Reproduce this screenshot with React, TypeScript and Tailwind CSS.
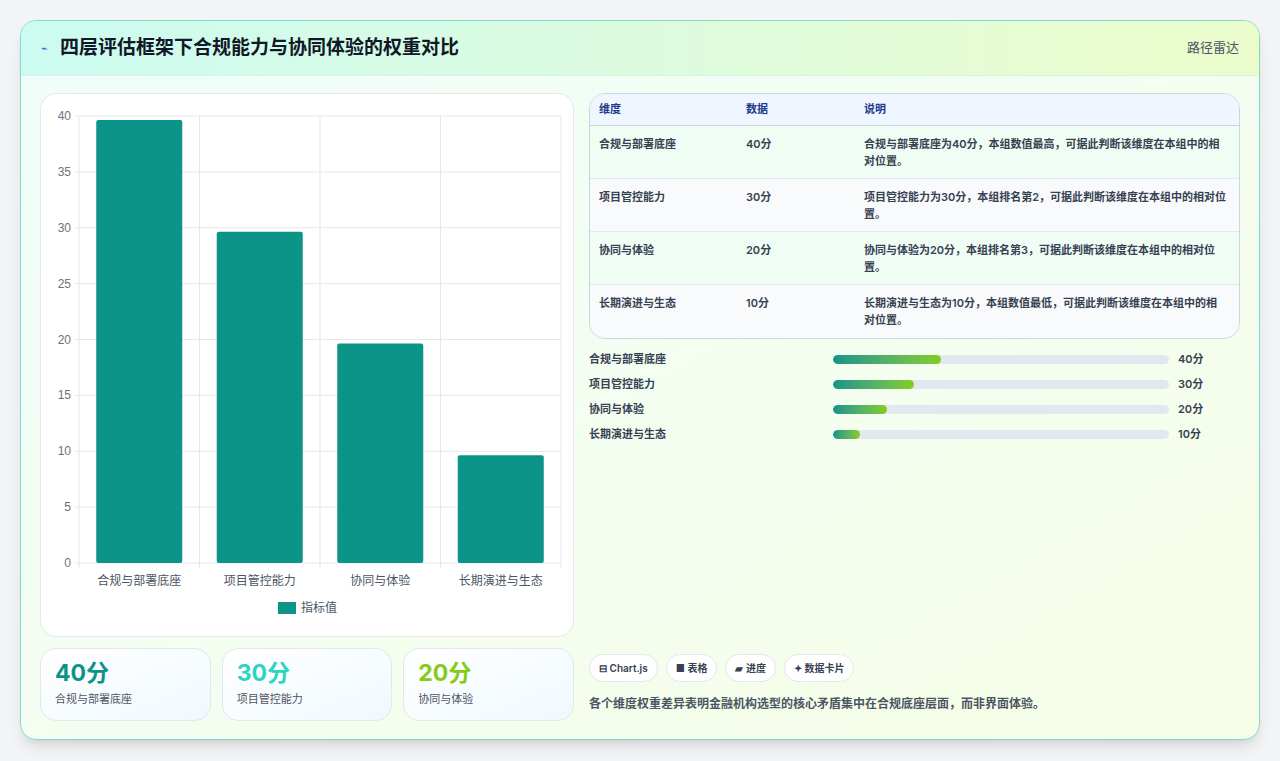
import React from "react";

const data = [
  { n: "合规与部署底座", v: 40, d: "合规与部署底座为40分，本组数值最高，可据此判断该维度在本组中的相对位置。" },
  { n: "项目管控能力", v: 30, d: "项目管控能力为30分，本组排名第2，可据此判断该维度在本组中的相对位置。" },
  { n: "协同与体验", v: 20, d: "协同与体验为20分，本组排名第3，可据此判断该维度在本组中的相对位置。" },
  { n: "长期演进与生态", v: 10, d: "长期演进与生态为10分，本组数值最低，可据此判断该维度在本组中的相对位置。" },
];

function Chart() {
  const W = 533, H = 543;
  const x0 = 38, x1 = 520, y0 = 22, y1 = 469;
  const ticks = [0, 5, 10, 15, 20, 25, 30, 35, 40];
  const cw = (x1 - x0) / 4;
  return (
    <svg width={W} height={H} className="block">
      {ticks.map((t) => {
        const y = y1 - ((y1 - y0) * t) / 40;
        return (
          <g key={t}>
            <line x1={x0 - 4} x2={x1} y1={y} y2={y} stroke="#e5e7eb" />
            <text x={x0 - 8} y={y + 4} textAnchor="end" fontSize="12" fill="#6b7280" fontFamily="Liberation Sans, sans-serif">{t}</text>
          </g>
        );
      })}
      {[0, 1, 2, 3, 4].map((i) => (
        <line key={i} x1={x0 + cw * i} x2={x0 + cw * i} y1={y0} y2={y1 + 5} stroke="#e5e7eb" />
      ))}
      {data.map((d, i) => {
        const h = ((y1 - y0) * d.v) / 40;
        const cx = x0 + cw * i + cw / 2;
        return (
          <g key={i}>
            <rect x={cx - 43} y={y1 - h + 4} width={86} height={h - 4} rx={2} fill="#0d9488" />
            <text x={cx} y={y1 + 22} textAnchor="middle" fontSize="12" fill="#4b5563" fontFamily="Noto Sans CJK SC, sans-serif">{d.n}</text>
          </g>
        );
      })}
      <rect x={237} y={508} width={18} height={12} fill="#0d9488" />
      <text x={260} y={518} fontSize="12" fill="#4b5563" fontFamily="Noto Sans CJK SC, sans-serif">指标值</text>
    </svg>
  );
}

export default function App() {
  return (
    <div className="w-[1280px] h-[761px] bg-[#f3f4f6] p-5 pb-[21px]" style={{ fontFamily: "Inter, 'Noto Sans CJK SC', sans-serif" }}>
      <div className="h-full rounded-2xl border border-[#7ddcd0] overflow-hidden flex flex-col bg-gradient-to-br from-[#f0fdfa] to-[#f7fee7] shadow-lg">
        <div className="h-[55px] shrink-0 flex items-center justify-between px-5 bg-gradient-to-r from-[#ccfbf1] to-[#ecfccb] border-b border-[#d1f5e8]">
          <div className="flex items-center gap-3">
            <span className="text-[11px] text-blue-600">⌁</span>
            <span className="text-[19px] font-bold text-[#111827]">四层评估框架下合规能力与协同体验的权重对比</span>
          </div>
          <span className="text-[13px] text-[#4b5563]">路径雷达</span>
        </div>
        <div className="flex-1 flex gap-[15px] px-[19px] pt-[17px] pb-[18px]">
          <div className="w-[534px] flex flex-col gap-[11px]">
            <div className="h-[544px] bg-white rounded-2xl border border-[#e5e7eb] overflow-hidden"><Chart /></div>
            <div className="flex gap-[11px]">
              {[
                ["40分", "text-[#0d9488]", "合规与部署底座"],
                ["30分", "text-[#2dd4bf]", "项目管控能力"],
                ["20分", "text-[#84cc16]", "协同与体验"],
              ].map(([v, c, l]) => (
                <div key={l} className="flex-1 h-[73px] rounded-2xl border border-[#e5e7eb] bg-gradient-to-br from-white to-[#f0f9ff] px-[14px] pt-[10px]">
                  <div className={`text-[23px] font-bold leading-7 ${c}`}>{v}</div>
                  <div className="text-[11px] text-[#4b5563] mt-1">{l}</div>
                </div>
              ))}
            </div>
          </div>
          <div className="flex-1 flex flex-col">
            <div className="rounded-2xl border border-[#cbd5e1] overflow-hidden text-[11px] font-semibold text-[#374151]">
              <div className="flex h-[32px] items-center bg-[#eff6ff] text-[#1e3a8a] border-b border-[#cbd5e1]">
                <div className="w-[156px] pl-[9px]">维度</div>
                <div className="w-[118px]">数据</div>
                <div className="flex-1">说明</div>
              </div>
              {data.map((d, i) => (
                <div key={i} className={`flex h-[53px] pt-[10px] ${i % 2 ? "bg-[#f8fafc]" : "bg-[#f0fdf4]"} ${i < 3 ? "border-b border-[#e2e8f0]" : ""}`}>
                  <div className="w-[156px] pl-[9px]">{d.n}</div>
                  <div className="w-[118px]">{d.v}分</div>
                  <div className="flex-1 pr-3 leading-[17px]">{d.d}</div>
                </div>
              ))}
            </div>
            <div className="mt-[12px] flex flex-col gap-[9px]">
              {data.map((d, i) => (
                <div key={i} className="flex items-center h-4 text-[11px] font-semibold text-[#374151]">
                  <div className="w-[244px]">{d.n}</div>
                  <div className="w-[336px] h-[9px] rounded-full bg-[#e2e8f0] overflow-hidden">
                    <div className="h-full rounded-full bg-gradient-to-r from-[#0d9488] to-[#84cc16]" style={{ width: `${d.v * 0.8}%` }} />
                  </div>
                  <div className="ml-[9px]">{d.v}分</div>
                </div>
              ))}
            </div>
            <div className="flex-1" />
            <div className="flex gap-2 text-[10px] font-semibold text-[#374151]">
              {["⊟ Chart.js", "■ 表格", "▰ 进度", "✦ 数据卡片"].map((t) => (
                <span key={t} className="h-[28px] px-[9px] flex items-center rounded-full bg-white border border-[#e5e7eb]">{t}</span>
              ))}
            </div>
            <div className="mt-[13px] mb-[8px] text-[12px] font-semibold text-[#4b5563]">各个维度权重差异表明金融机构选型的核心矛盾集中在合规底座层面，而非界面体验。</div>
          </div>
        </div>
      </div>
    </div>
  );
}
